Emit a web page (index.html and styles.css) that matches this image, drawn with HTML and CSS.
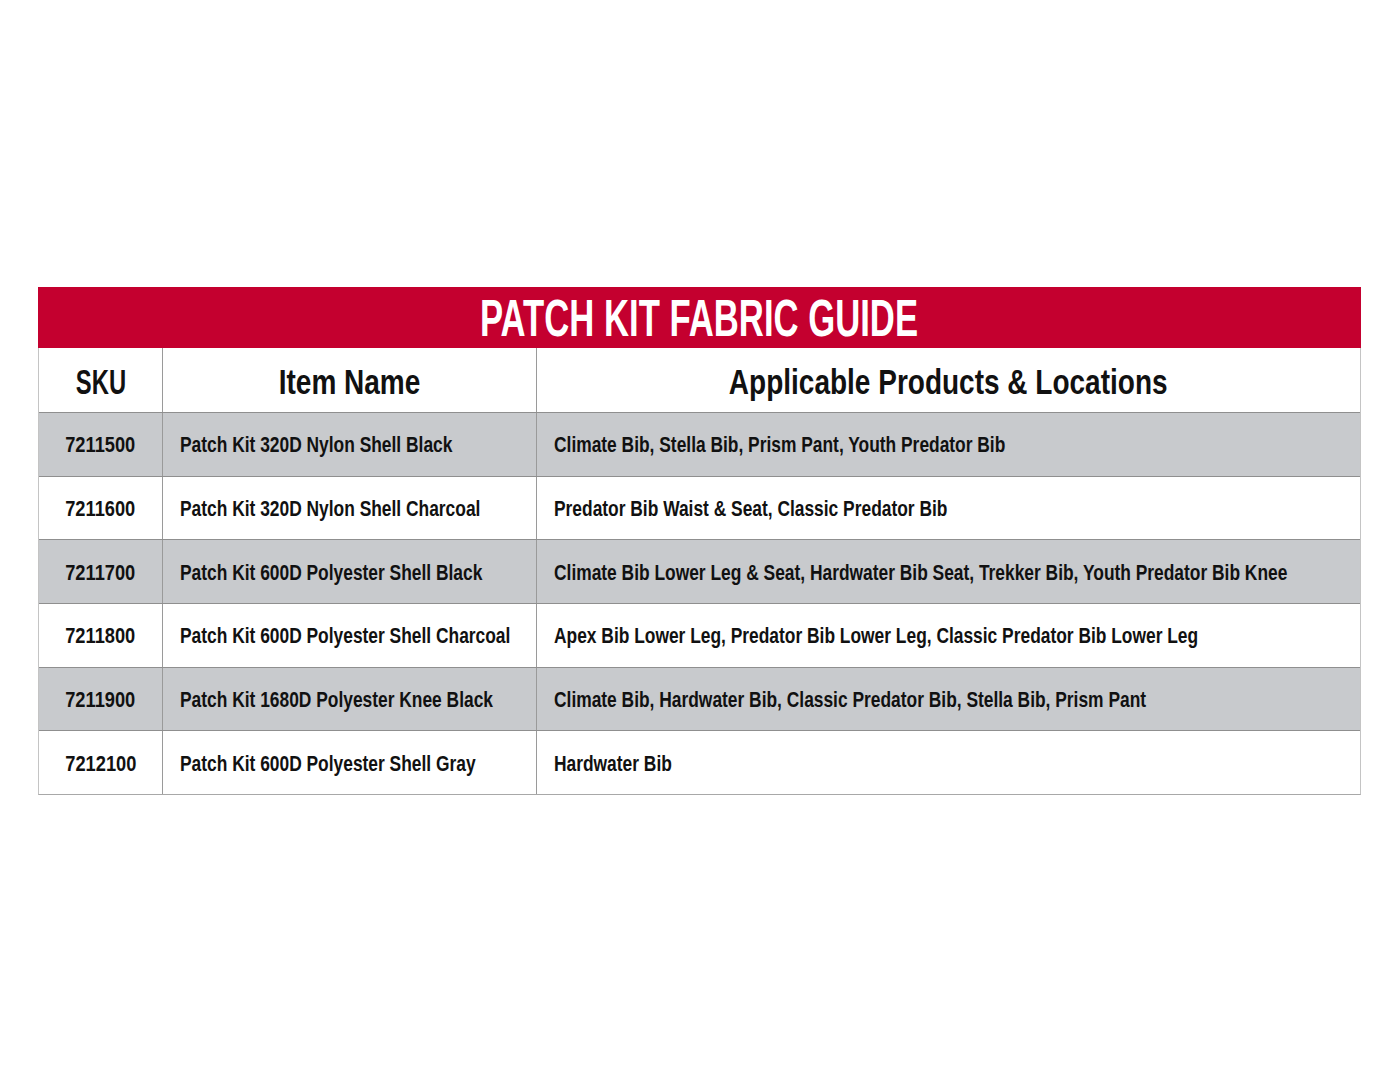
FILE: index.html
```html
<!DOCTYPE html>
<html lang="en">
<head>
<meta charset="utf-8">
<title>Patch Kit Fabric Guide</title>
<link rel="stylesheet" href="styles.css">
</head>
<body>
<div class="guide">
  <div class="title"><span class="sq t">PATCH KIT FABRIC GUIDE</span></div>
  <div class="row head">
    <div class="cell c1"><span class="sq h sku">SKU</span></div>
    <div class="cell c2"><span class="sq h">Item Name</span></div>
    <div class="cell c3"><span class="sq h">Applicable Products &amp; Locations</span></div>
  </div>
  <div class="row gray">
    <div class="cell c1"><span class="sq b num">7211500</span></div>
    <div class="cell c2 l"><span class="sq b">Patch Kit 320D Nylon Shell Black</span></div>
    <div class="cell c3 l"><span class="sq b">Climate Bib, Stella Bib, Prism Pant, Youth Predator Bib</span></div>
  </div>
  <div class="row">
    <div class="cell c1"><span class="sq b num">7211600</span></div>
    <div class="cell c2 l"><span class="sq b">Patch Kit 320D Nylon Shell Charcoal</span></div>
    <div class="cell c3 l"><span class="sq b">Predator Bib Waist &amp; Seat, Classic Predator Bib</span></div>
  </div>
  <div class="row gray">
    <div class="cell c1"><span class="sq b num">7211700</span></div>
    <div class="cell c2 l"><span class="sq b">Patch Kit 600D Polyester Shell Black</span></div>
    <div class="cell c3 l"><span class="sq b">Climate Bib Lower Leg &amp; Seat, Hardwater Bib Seat, Trekker Bib, Youth Predator Bib Knee</span></div>
  </div>
  <div class="row">
    <div class="cell c1"><span class="sq b num">7211800</span></div>
    <div class="cell c2 l"><span class="sq b">Patch Kit 600D Polyester Shell Charcoal</span></div>
    <div class="cell c3 l"><span class="sq b">Apex Bib Lower Leg, Predator Bib Lower Leg, Classic Predator Bib Lower Leg</span></div>
  </div>
  <div class="row gray">
    <div class="cell c1"><span class="sq b num">7211900</span></div>
    <div class="cell c2 l"><span class="sq b">Patch Kit 1680D Polyester Knee Black</span></div>
    <div class="cell c3 l"><span class="sq b">Climate Bib, Hardwater Bib, Classic Predator Bib, Stella Bib, Prism Pant</span></div>
  </div>
  <div class="row last">
    <div class="cell c1"><span class="sq b num">7212100</span></div>
    <div class="cell c2 l"><span class="sq b">Patch Kit 600D Polyester Shell Gray</span></div>
    <div class="cell c3 l"><span class="sq b">Hardwater Bib</span></div>
  </div>
</div>
</body>
</html>
```

FILE: styles.css
```css
html, body {
  margin: 0;
  padding: 0;
  background: #ffffff;
}
body {
  padding: 287px 0 0 38px;
  font-family: "Liberation Sans", Arial, sans-serif;
  font-weight: bold;
  color: #111111;
}
.guide {
  width: 1323px;
  box-sizing: border-box;
  border-left: 1px solid #c4c4c4;
  border-right: 1px solid #c4c4c4;
  border-bottom: 1px solid #a8a8a8;
}
.title {
  height: 61px;
  background: #c4002f;
  color: #ffffff;
  display: flex;
  align-items: center;
  justify-content: center;
  margin: 0 -1px;
}
.sq {
  display: inline-block;
  white-space: nowrap;
}
.t {
  font-size: 51px;
  line-height: 50px;
  transform: scaleX(0.68);
  transform-origin: center;
  margin-top: 3px;
}
.h {
  font-size: 35px;
  line-height: 36px;
  transform: scaleX(0.8);
  transform-origin: center;
  margin-top: 3px;
}
.h.sku {
  transform: scaleX(0.68);
}
.b {
  font-size: 22px;
  line-height: 24px;
  transform: scaleX(0.79);
  transform-origin: left center;
  margin-top: 2px;
}
.c1 .b.num {
  transform: scaleX(0.83);
  transform-origin: center;
}
.row {
  display: grid;
  grid-template-columns: 123px 374px 1fr;
  height: 63.67px;
  box-sizing: border-box;
  border-top: 1px solid #8f8f8f;
}
.row.head {
  height: 64px;
  border-top: none;
}
.row.gray {
  background: #c8cacd;
}
.cell {
  display: flex;
  align-items: center;
  justify-content: center;
  overflow: visible;
  min-width: 0;
}
.cell.l {
  justify-content: flex-start;
  padding-left: 17px;
}
.c2, .c3 {
  border-left: 1px solid #9a9a9a;
}
```
